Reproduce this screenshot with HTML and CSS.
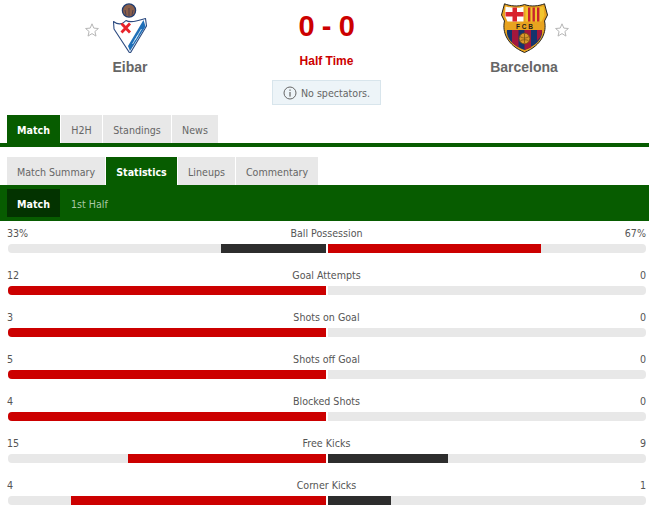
FILE: index.html
```html
<!DOCTYPE html>
<html lang="en">
<head>
<meta charset="utf-8">
<title>Eibar vs Barcelona</title>
<link rel="stylesheet" href="styles.css">
</head>
<body>
<header class="match-head">
  <div class="team">
    <div class="crest-row">
      <svg class="star star-left" viewBox="0 0 14 14"><path d="M7 .8l1.800 4.300 4.600.4-3.500 3 1.100 4.600L7 10.600 3 13.100l1.100-4.600-3.500-3 4.600-.4z"/></svg>
      <svg class="crest" viewBox="0 0 44 50">
        <circle cx="21" cy="7.500" r="6.600" fill="#8a5f4a" stroke="#1f3b6e" stroke-width="1.300"/>
        <path d="M17 7l1 5M21 5v8M25 7l-1 5" stroke="#3c3550" stroke-width=".8" fill="none"/>
        <path d="M5.500 18.500C10 22 14 22 18 17.500C22 20 30 18 37.500 15.500L38.500 23L22 50.500L6 26Z" fill="#fff" stroke="#2b4a80" stroke-width="1.100" stroke-linejoin="round"/>
        <path d="M35.500 17L37.500 23.500L22 48L20 43Z" fill="#1f6fb8"/>
        <path d="M24.500 41l9-15M27 37l3-5" stroke="#cfe3f3" stroke-width=".9" fill="none"/>
        <path d="M13.500 20.500l8.500 9M22 20.500l-8.500 9" stroke="#e8232a" stroke-width="2.800"/>
      </svg>
      <span class="crest-side"></span>
    </div>
    <div class="team-name">Eibar</div>
  </div>
  <div class="score-box">
    <div class="score">0 - 0</div>
    <div class="status">Half Time</div>
    <div class="notice">
      <svg class="info" viewBox="0 0 14 14"><circle cx="7" cy="7" r="6" fill="none" stroke="#666" stroke-width="1"/><rect x="6.400" y="6" width="1.200" height="4.600" fill="#666"/><rect x="6.400" y="3.500" width="1.200" height="1.300" fill="#666"/></svg>
      <span class="notice-text">No spectators.</span>
    </div>
  </div>
  <div class="team">
    <div class="crest-row">
      <span class="crest-side"></span>
      <svg class="crest crest-fcb" viewBox="0 0 47 50">
        <path d="M23.500 1.500C30 4 38 3 43.500 .8L46.500 12L43.500 18C46 29 41 42 23.500 49.500C6 42 1 29 3.500 18L.5 12L3.500 .8C9 3 17 4 23.500 1.500Z" fill="#e8a31f" stroke="#26231c" stroke-width="1"/>
        <path d="M4.500 3.500C10 5 17 5.500 22.500 3.700V18.500H6.500L4 13Z" fill="#fff"/>
        <path d="M11.500 4.500h4.500V18.500h-4.500zM4.500 9h18v4.500h-18z" fill="#d8232f"/>
        <path d="M24.500 3.700C30 5.500 37 5 42.500 3.500L43.500 12.500L40.500 18.500H24.500Z" fill="#f2c52e"/>
        <path d="M27 4.500h2.400V18.500H27zM31.500 4.500h2.400V18.500h-2.400zM36 4.500h2.400V18.500H36z" fill="#c8242c"/>
        <rect x="6" y="20" width="35" height="6.500" fill="#e8a31f"/>
        <path d="M6 27H41C42 35 36 42 23.500 47C11 42 5 35 6 27Z" fill="#14346e"/>
        <path d="M11 27h6.500v17.500q-3.500-1.800-6.500-5zM23.500 27H30V44.500L23.500 47zM36 27h5q.4 6-5 11z" fill="#a3173c"/>
        <circle cx="23.500" cy="35.500" r="5.400" fill="#d9962a" stroke="#6b4a12" stroke-width=".8"/>
        <path d="M19 33.500c3 2 6 2 9 0M19.500 37.500c3-1 5-1 8 0M23.500 30.500v10" stroke="#6b4a12" stroke-width=".7" fill="none"/>
        <text class="fcb-text" x="23.500" y="25.500">F C B</text>
      </svg>
      <svg class="star star-right" viewBox="0 0 14 14"><path d="M7 .8l1.800 4.300 4.600.4-3.500 3 1.100 4.600L7 10.600 3 13.100l1.100-4.600-3.500-3 4.600-.4z"/></svg>
    </div>
    <div class="team-name">Barcelona</div>
  </div>
</header>

<nav class="tabs tabs-main">
  <a class="tab tab-m active">Match</a>
  <a class="tab tab-h">H2H</a>
  <a class="tab tab-s">Standings</a>
  <a class="tab tab-n">News</a>
</nav>

<nav class="tabs tabs-sub">
  <a class="tab tab-ms">Match Summary</a>
  <a class="tab tab-st active">Statistics</a>
  <a class="tab tab-l">Lineups</a>
  <a class="tab tab-c">Commentary</a>
</nav>

<div class="period-bar">
  <a class="period active">Match</a>
  <a class="period">1st Half</a>
</div>

<section class="stats">
  <div class="stat">
    <div class="stat-labels"><span>33%</span><span>Ball Possession</span><span>67%</span></div>
    <div class="bars">
      <div class="bar bar-left"><div class="fill dark" style="width:33%"></div></div>
      <div class="bar bar-right"><div class="fill red" style="width:67%"></div></div>
    </div>
  </div>
  <div class="stat">
    <div class="stat-labels"><span>12</span><span>Goal Attempts</span><span>0</span></div>
    <div class="bars">
      <div class="bar bar-left"><div class="fill red full" style="width:100%"></div></div>
      <div class="bar bar-right"></div>
    </div>
  </div>
  <div class="stat">
    <div class="stat-labels"><span>3</span><span>Shots on Goal</span><span>0</span></div>
    <div class="bars">
      <div class="bar bar-left"><div class="fill red full" style="width:100%"></div></div>
      <div class="bar bar-right"></div>
    </div>
  </div>
  <div class="stat">
    <div class="stat-labels"><span>5</span><span>Shots off Goal</span><span>0</span></div>
    <div class="bars">
      <div class="bar bar-left"><div class="fill red full" style="width:100%"></div></div>
      <div class="bar bar-right"></div>
    </div>
  </div>
  <div class="stat">
    <div class="stat-labels"><span>4</span><span>Blocked Shots</span><span>0</span></div>
    <div class="bars">
      <div class="bar bar-left"><div class="fill red full" style="width:100%"></div></div>
      <div class="bar bar-right"></div>
    </div>
  </div>
  <div class="stat">
    <div class="stat-labels"><span>15</span><span>Free Kicks</span><span>9</span></div>
    <div class="bars">
      <div class="bar bar-left"><div class="fill red" style="width:62.3%"></div></div>
      <div class="bar bar-right"><div class="fill dark" style="width:37.7%"></div></div>
    </div>
  </div>
  <div class="stat">
    <div class="stat-labels"><span>4</span><span>Corner Kicks</span><span>1</span></div>
    <div class="bars">
      <div class="bar bar-left"><div class="fill red" style="width:80.2%"></div></div>
      <div class="bar bar-right"><div class="fill dark" style="width:19.8%"></div></div>
    </div>
  </div>
</section>
</body>
</html>
```
FILE: styles.css
```css
* { box-sizing: border-box; }
html, body { margin: 0; padding: 0; }
body {
  background: #fff;
  color: #555;
  font-family: "DejaVu Sans Condensed", "DejaVu Sans", Tahoma, sans-serif;
  font-size: 10.6px;
  overflow: hidden;
}
.match-head {
  display: grid;
  grid-template-columns: 240px 153px 242px;
  padding: 0 4px 0 10px;
  height: 115px;
}
.team { display: flex; flex-direction: column; align-items: center; }
.crest-row {
  display: grid;
  grid-template-columns: 1fr auto 1fr;
  align-items: start;
  width: 100%;
  height: 54px;
  padding-top: 3px;
}
.crest { width: 44px; height: 50px; display: block; }
.crest-fcb { width: 47px; }
.star { width: 14px; height: 14px; margin-top: 20px; fill: #fff; stroke: #b5b5b5; stroke-width: 1; }
.star-left { justify-self: end; margin-right: 9px; }
.star-right { justify-self: start; margin-left: 7px; }
.fcb-text { font: bold 6.500px "Liberation Sans", sans-serif; fill: #1c1c1c; text-anchor: middle; }
.team-name {
  font-family: "Liberation Sans", Arial, sans-serif;
  font-weight: bold;
  font-size: 14px;
  line-height: 16px;
  margin-top: 5px;
  color: #666;
}
.score-box { display: flex; flex-direction: column; align-items: center; }
.score {
  font-family: "Liberation Sans", Arial, sans-serif;
  font-weight: bold;
  font-size: 29px;
  line-height: 36px;
  letter-spacing: -0.4px;
  margin-top: 8px;
  color: #c00;
}
.status {
  font-family: "Liberation Sans", Arial, sans-serif;
  font-weight: bold;
  font-size: 12px;
  line-height: 14px;
  margin-top: 10px;
  color: #c00;
}
.notice {
  display: flex;
  align-items: center;
  justify-content: center;
  gap: 4px;
  width: 109px;
  height: 25px;
  margin-top: 12px;
  background: #edf4f8;
  border: 1px solid #d8e5ec;
  color: #666;
  white-space: nowrap;
}
.notice-text { padding-top: 1px; }
.info { width: 14px; height: 14px; flex: none; }
.tabs { display: flex; padding-left: 7px; height: 28px; }
.tab {
  display: flex;
  align-items: center;
  justify-content: center;
  flex: none;
  height: 28px;
  padding-top: 2px;
  background: #e8e8e8;
  color: #666;
  line-height: 1;
  white-space: nowrap;
}
.tab.active { background: #075c00; color: #fff; font-weight: bold; }
.tab-m { width: 53px; margin-right: 1px; }
.tab-h { width: 41px; margin-right: 1px; }
.tab-s { width: 68px; margin-right: 1px; }
.tab-n { width: 46px; }
.tab-ms { width: 98px; margin-right: 1px; }
.tab-st { width: 71px; margin-right: 1px; }
.tab-l { width: 57px; margin-right: 1px; }
.tab-c { width: 82px; }
.tabs-main { box-sizing: content-box; border-bottom: 4px solid #075c00; margin-bottom: 10px; }
.period-bar {
  display: flex;
  align-items: center;
  height: 36px;
  padding-left: 7px;
  background: #075c00;
}
.period {
  display: flex;
  align-items: center;
  justify-content: center;
  padding: 2px 11px 0;
  height: 28px;
  color: #a9c9a6;
}
.period.active { width: 53px; padding: 2px 0 0; background: #033300; color: #fff; font-weight: bold; }
.stats { padding: 0 3px 0 8px; }
.stat { height: 42px; }
.stat-labels {
  display: flex;
  justify-content: space-between;
  height: 23px;
  padding-top: 4px;
  margin: 0 0 0 -1px;
  line-height: 16px;
}
.stat-labels span:nth-child(2) { text-align: center; flex: 1; }
.stat-labels span:first-child, .stat-labels span:last-child { flex: 0 0 40px; }
.stat-labels span:last-child { text-align: right; }
.bars { display: flex; gap: 2px; }
.bar {
  display: flex;
  width: 318px;
  height: 9px;
  background: #e8e8e8;
}
.bar-left { justify-content: flex-end; border-radius: 4px 0 0 4px; }
.bar-right { justify-content: flex-start; border-radius: 0 4px 4px 0; }
.fill { height: 100%; }
.fill.red { background: #c00; }
.fill.dark { background: #2d2d2d; }
.fill.full { border-radius: 4px 0 0 4px; }
```
